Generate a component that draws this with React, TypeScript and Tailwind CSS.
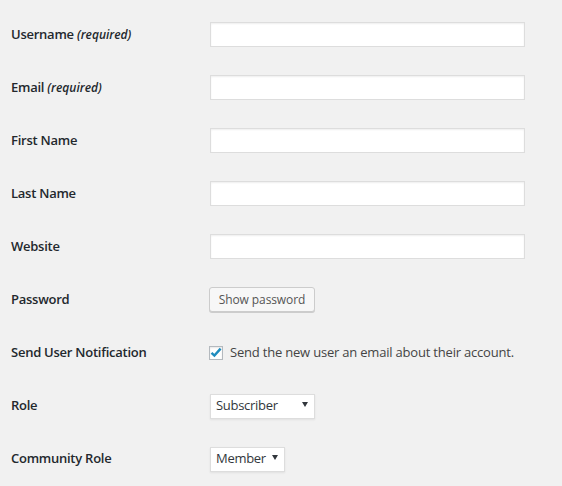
import type { ReactNode } from "react";

const font = { fontFamily: '"Open Sans", "Noto Sans", sans-serif' };

function Row({ label, children }: { label: ReactNode; children: ReactNode }) {
  return (
    <div className="flex items-center h-[25px]">
      <div className="w-[210px] pl-[11px] text-[13px] font-semibold tracking-[-0.25px] text-[#23282d] leading-none">
        {label}
      </div>
      <div className="flex items-center">{children}</div>
    </div>
  );
}

function TextInput() {
  return (
    <input
      type="text"
      className="w-[315px] h-[25px] bg-white border border-[#dddddd] shadow-[inset_0_1px_2px_rgba(0,0,0,0.07)] outline-none px-2 text-[13px]"
    />
  );
}

function Select({ value, width }: { value: string; width: string }) {
  return (
    <div className={`relative ${width}`}>
      <select
        defaultValue={value}
        className="appearance-none w-full h-[25px] bg-white border border-[#dddddd] shadow-[0_1px_2px_rgba(0,0,0,0.07)] pl-[5px] pr-4 text-[13px] tracking-[-0.3px] text-[#32373c] outline-none"
        style={font}
      >
        <option>{value}</option>
      </select>
      <svg
        className="pointer-events-none absolute right-[7px] top-[10px]"
        width="6"
        height="5"
        viewBox="0 0 6 5"
      >
        <path d="M0 0h6L3 5z" fill="#32373c" />
      </svg>
    </div>
  );
}

export default function App() {
  return (
    <div className="min-h-[486px] bg-[#f1f1f1] pt-[22px]" style={font}>
      <div className="flex flex-col gap-[28px]">
        <Row
          label={
            <>
              Username{" "}
              <span className="italic text-[12px] tracking-normal">(required)</span>
            </>
          }
        >
          <TextInput />
        </Row>
        <Row
          label={
            <>
              Email{" "}
              <span className="italic text-[12px] tracking-normal">(required)</span>
            </>
          }
        >
          <TextInput />
        </Row>
        <Row label="First Name">
          <TextInput />
        </Row>
        <Row label="Last Name">
          <TextInput />
        </Row>
        <Row label="Website">
          <TextInput />
        </Row>
        <Row label="Password">
          <button
            type="button"
            className="-ml-px h-[25px] w-[106px] bg-[#f7f7f7] border border-[#cccccc] rounded-[3px] shadow-[0_1px_0_#cccccc] text-[12px] tracking-[-0.1px] text-[#555555] leading-none"
            style={font}
          >
            Show password
          </button>
        </Row>
        <Row label="Send User Notification">
          <label className="-ml-px flex items-center gap-[7px] text-[13px] tracking-[-0.2px] font-normal text-[#444444]">
            <span className="w-[14px] h-[14px] bg-white border border-[#b4b9be] shadow-[inset_0_1px_2px_rgba(0,0,0,0.1)] flex items-center justify-center">
              <svg width="12" height="11" viewBox="0 0 12 11">
                <path
                  d="M1.5 5.8 L4.4 8.6 L10.6 1.6"
                  fill="none"
                  stroke="#1e8cbe"
                  strokeWidth="2.4"
                />
              </svg>
            </span>
            Send the new user an email about their account.
          </label>
        </Row>
        <Row label="Role">
          <Select value="Subscriber" width="w-[105px]" />
        </Row>
        <Row label="Community Role">
          <Select value="Member" width="w-[75px]" />
        </Row>
      </div>
    </div>
  );
}
